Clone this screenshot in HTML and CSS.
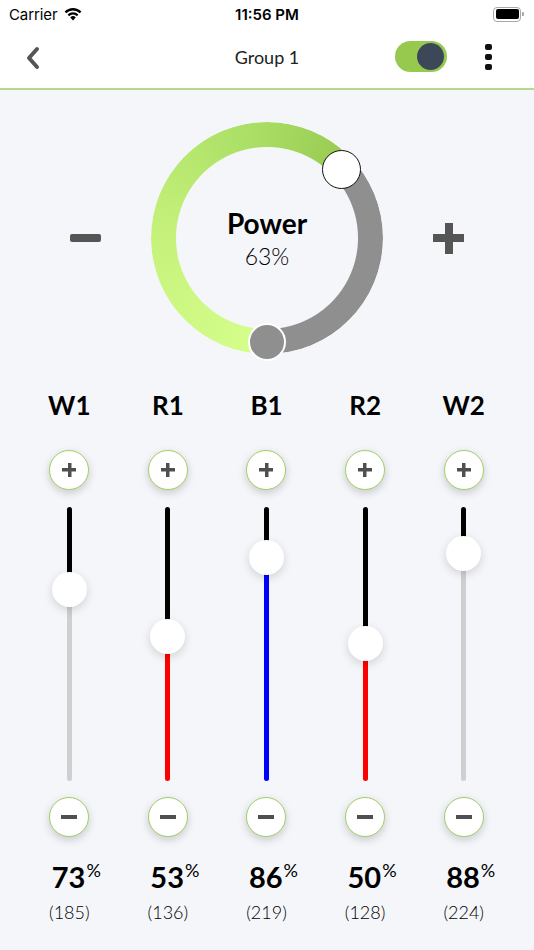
FILE: index.html
```
<!DOCTYPE html>
<html>
<head>
<meta charset="utf-8">
<link rel="stylesheet" href="styles.css">
<title>Group 1</title>
</head>
<body>
<div class="status">
  <div class="carrier">Carrier
    <svg class="wifi" width="20" height="15" viewBox="0 0 20 15">
      <path d="M10 14.5 L7.2 11.4 A4 4 0 0 1 12.8 11.4 Z" fill="#000"/>
      <path d="M4.6 8.6 A7.6 7.6 0 0 1 15.4 8.6 L13.9 10.2 A5.5 5.5 0 0 0 6.1 10.2 Z" fill="#000"/>
      <path d="M1.6 5.6 A11.8 11.8 0 0 1 18.4 5.6 L16.8 7.2 A9.6 9.6 0 0 0 3.2 7.2 Z" fill="#000"/>
    </svg>
  </div>
  <div class="clock">11:56 PM</div>
  <div class="battery"><span class="battery-body"><span class="battery-fill"></span></span><span class="battery-tip"></span></div>
</div>

<div class="header">
  <svg class="back" width="16" height="24" viewBox="0 0 16 24">
    <polyline points="12,3 4,12 12,21" fill="none" stroke="#555" stroke-width="4" stroke-linecap="round" stroke-linejoin="round"/>
  </svg>
  <div class="title">Group 1</div>
  <div class="toggle"><span class="toggle-knob"></span></div>
  <div class="kebab"><span></span><span></span><span></span></div>
</div>

<div class="main">
  <div class="power">
    <div class="big-minus"></div>
    <div class="ring">
      <div class="ring-track"></div>
      <div class="ring-label">
        <div class="ring-title">Power</div>
        <div class="ring-value">63%</div>
      </div>
      <div class="ring-start"></div>
      <div class="ring-end"></div>
    </div>
    <div class="big-plus"></div>
  </div>

  <div class="channels">
    <div class="channel">
      <div class="ch-name">W1</div>
      <div class="round-btn plus"></div>
      <div class="track white" style="--pos: 82px"><span class="knob"></span></div>
      <div class="round-btn minus"></div>
      <div class="ch-pct">73<sup>%</sup></div>
      <div class="ch-raw">(185)</div>
    </div>
    <div class="channel">
      <div class="ch-name">R1</div>
      <div class="round-btn plus"></div>
      <div class="track red" style="--pos: 129px"><span class="knob"></span></div>
      <div class="round-btn minus"></div>
      <div class="ch-pct">53<sup>%</sup></div>
      <div class="ch-raw">(136)</div>
    </div>
    <div class="channel">
      <div class="ch-name">B1</div>
      <div class="round-btn plus"></div>
      <div class="track blue" style="--pos: 50px"><span class="knob"></span></div>
      <div class="round-btn minus"></div>
      <div class="ch-pct">86<sup>%</sup></div>
      <div class="ch-raw">(219)</div>
    </div>
    <div class="channel">
      <div class="ch-name">R2</div>
      <div class="round-btn plus"></div>
      <div class="track red" style="--pos: 136px"><span class="knob"></span></div>
      <div class="round-btn minus"></div>
      <div class="ch-pct">50<sup>%</sup></div>
      <div class="ch-raw">(128)</div>
    </div>
    <div class="channel">
      <div class="ch-name">W2</div>
      <div class="round-btn plus"></div>
      <div class="track white" style="--pos: 46px"><span class="knob"></span></div>
      <div class="round-btn minus"></div>
      <div class="ch-pct">88<sup>%</sup></div>
      <div class="ch-raw">(224)</div>
    </div>
  </div>
</div>
</body>
</html>
```

FILE: styles.css
```
html, body {
  margin: 0;
  padding: 0;
}

body {
  width: 534px;
  height: 950px;
  background: #f4f6fa;
  font-family: Lato, "Noto Sans", sans-serif;
  color: #000;
  overflow: hidden;
}

/* status bar */
.status {
  height: 28px;
  background: #fff;
  display: flex;
  align-items: center;
  justify-content: space-between;
  padding: 0 10px 0 9px;
  position: relative;
  font-family: Inter, "Noto Sans", sans-serif;
  font-size: 15px;
}

.carrier {
  display: flex;
  align-items: center;
  gap: 6px;
  letter-spacing: -0.1px;
}

.wifi {
  margin-top: -2px;
}

.clock {
  position: absolute;
  left: 0;
  right: 0;
  text-align: center;
  font-weight: 600;
}

.battery {
  display: flex;
  align-items: center;
}

.battery-body {
  width: 23px;
  height: 10px;
  border: 1.5px solid #a9a9a9;
  border-radius: 4px;
  padding: 1.5px;
  display: block;
}

.battery-fill {
  display: block;
  width: 100%;
  height: 100%;
  background: #000;
  border-radius: 2px;
}

.battery-tip {
  width: 2px;
  height: 4px;
  background: #a9a9a9;
  border-radius: 0 1px 1px 0;
  margin-left: 1px;
}

/* header */
.header {
  height: 62px;
  box-sizing: border-box;
  padding: 0 42px 3px 25px;
  background: #fff;
  border-bottom: 2px solid #b3db8a;
  display: flex;
  align-items: center;
  position: relative;
}

.back {
  margin-top: 2px;
}

.title {
  position: absolute;
  left: 0;
  right: 0;
  text-align: center;
  font-size: 18px;
  color: #222;
  pointer-events: none;
}

.toggle {
  margin-left: auto;
  width: 52px;
  height: 31px;
  background: #97c94f;
  border-radius: 16px;
  display: flex;
  align-items: center;
  justify-content: flex-end;
  padding: 0 3px;
  box-sizing: border-box;
  margin-right: 38px;
}

.toggle-knob {
  width: 27px;
  height: 27px;
  border-radius: 50%;
  background: #3c4858;
}

.kebab {
  display: flex;
  flex-direction: column;
  gap: 4px;
}

.kebab span {
  width: 7px;
  height: 6px;
  background: #111;
  border-radius: 2px;
}

/* power ring */
.power {
  display: grid;
  grid-template-columns: 1fr 232px 1fr;
  align-items: center;
  padding-top: 32px;
}

.big-minus {
  justify-self: start;
  margin-left: 70px;
  width: 31px;
  height: 8px;
  background: #555;
  border-radius: 2px;
}

.big-plus {
  justify-self: end;
  margin-right: 70px;
  width: 31px;
  height: 31px;
  background:
    linear-gradient(#555, #555) center / 31px 8px no-repeat,
    linear-gradient(#555, #555) center / 8px 31px no-repeat;
  border-radius: 2px;
}

.ring {
  width: 232px;
  height: 232px;
  position: relative;
}

.ring-track {
  position: absolute;
  inset: 0;
  border-radius: 50%;
  background: conic-gradient(from 180deg, #d6ff8c 0deg, #c6f27b 90deg, #abdf66 170deg, #98ca50 227deg, #8f8f8f 227deg 360deg);
  -webkit-mask: radial-gradient(circle, transparent 90.5px, #000 91.5px);
  mask: radial-gradient(circle, transparent 90.5px, #000 91.5px);
}

.ring-label {
  position: absolute;
  inset: 0;
  display: flex;
  flex-direction: column;
  align-items: center;
  justify-content: center;
  gap: 3px;
}

.ring-title {
  font-size: 28px;
  font-weight: 700;
  line-height: 32px;
}

.ring-value {
  font-size: 23px;
  font-weight: 300;
  line-height: 28px;
}

.ring-start {
  position: absolute;
  left: 97px;
  top: 201px;
  width: 34px;
  height: 34px;
  border-radius: 50%;
  background: #8f8f8f;
  border: 2px solid #fff;
}

.ring-end {
  position: absolute;
  left: 171px;
  top: 28px;
  width: 37px;
  height: 37px;
  border-radius: 50%;
  background: #fff;
  border: 1.5px solid #111;
}

/* channels */
.channels {
  display: grid;
  grid-template-columns: repeat(5, 1fr);
  padding: 0 21px 0 20px;
  margin-top: 36px;
}

.channel {
  display: flex;
  flex-direction: column;
  align-items: center;
}

.ch-name {
  font-size: 26px;
  font-weight: 700;
  line-height: 30px;
}

.round-btn {
  width: 40px;
  height: 40px;
  box-sizing: border-box;
  border-radius: 50%;
  background-color: #fff;
  border: 1.5px solid #9fd063;
  box-shadow: 0 3px 9px rgba(0, 0, 0, 0.18);
  background-repeat: no-repeat;
  background-position: center;
}

.round-btn.plus {
  margin-top: 30px;
  background-image:
    linear-gradient(#4f4f4f, #4f4f4f),
    linear-gradient(#4f4f4f, #4f4f4f);
  background-size: 14px 3.5px, 3.5px 14px;
}

.round-btn.minus {
  margin-top: 16px;
  background-image: linear-gradient(#4f4f4f, #4f4f4f);
  background-size: 16px 4px;
}

.track {
  --fill: #cfcfcf;
  margin-top: 17px;
  width: 5px;
  height: 274px;
  border-radius: 3px;
  position: relative;
  background: linear-gradient(#000 0, #000 var(--pos), var(--fill) var(--pos));
}

.track.red { --fill: #ff0000; }
.track.blue { --fill: #0000ff; }

.knob {
  position: absolute;
  left: 50%;
  top: var(--pos);
  width: 35px;
  height: 35px;
  margin: -17.5px 0 0 -17.5px;
  border-radius: 50%;
  background: #fff;
  box-shadow: 0 3px 10px rgba(0, 0, 0, 0.15);
}

.ch-pct {
  margin-top: 23px;
  font-size: 29px;
  font-weight: 700;
  line-height: 34px;
  padding-left: 14px;
}

.ch-pct sup {
  font-size: 18px;
  font-weight: 400;
  vertical-align: 0;
  position: relative;
  top: -11px;
  margin-left: 1px;
}

.ch-raw {
  margin-top: 3px;
  font-size: 18px;
  font-weight: 300;
  line-height: 22px;
  color: #000;
}
```
